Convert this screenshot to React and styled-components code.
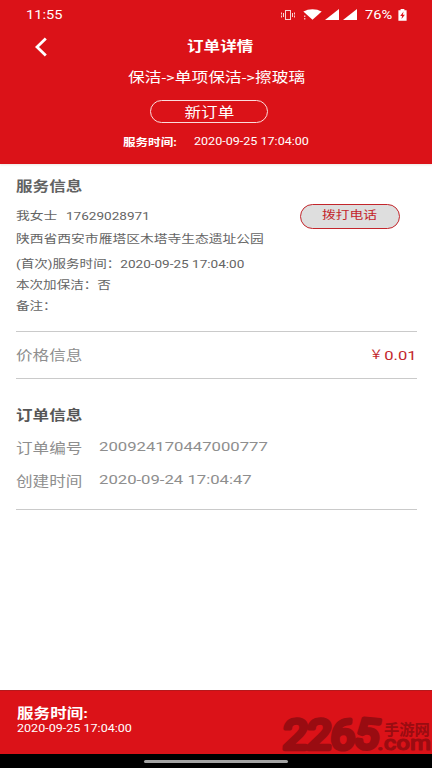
import styled, { createGlobalStyle } from 'styled-components';

const colors = {
  red: '#db1218',
  accent: '#c3262c',
  heading: '#565656',
  text: '#646464',
  muted: '#8e8e8e',
  line: '#cacaca',
  mark: '#990c11',
};

const GlobalStyle = createGlobalStyle`
  * {
    box-sizing: border-box;
  }
  body {
    margin: 0;
    background: #fff;
    font-family: Roboto, "Noto Sans CJK SC", sans-serif;
  }
`;

const Page = styled.div`
  position: relative;
  width: 432px;
  height: 768px;
  display: flex;
  flex-direction: column;
  overflow: hidden;
`;

const Label = styled.span`
  display: block;
  flex: none;
  width: max-content;
  white-space: pre;
  font-size: ${props => props.$size || 11.3}px;
  line-height: 20px;
  font-weight: ${props => props.$weight || 400};
  color: ${props => props.$color || colors.text};
  transform: scaleX(${props => props.$stretch || 1.219});
  transform-origin: ${props => props.$origin || 'left'} center;
`;

const Header = styled.header`
  height: 164px;
  flex: none;
  background: ${colors.red};
  box-shadow: 0 1px 2px rgba(120, 90, 60, 0.15);
`;

const StatusBar = styled.div`
  display: flex;
  align-items: center;
  justify-content: space-between;
  height: 29px;
  padding: 0 25px 0 26px;
`;

const StatusIcons = styled.div`
  display: flex;
  align-items: center;
  svg {
    display: block;
  }
`;

const Percent = styled.div`
  width: 33px;
  margin-left: 8px;
`;

const TitleBar = styled.div`
  display: grid;
  grid-template-columns: 82px 1fr 82px;
  align-items: center;
  justify-items: center;
  height: 36px;
  > ${Label} {
    margin: 0 0 2px 9px;
  }
`;

const BackButton = styled.button`
  display: block;
  padding: 0;
  border: 0;
  background: none;
  svg {
    display: block;
  }
`;

const Crumbs = styled.div`
  display: flex;
  height: 24px;
  padding: 2px 0 0 127.5px;
`;

const StatusPill = styled.div`
  display: flex;
  align-items: center;
  justify-content: center;
  width: 118px;
  height: 23px;
  margin: 11px 0 0 150px;
  border: 1px solid #fbdcdc;
  border-radius: 12px;
`;

const HeaderTime = styled.div`
  display: flex;
  align-items: flex-start;
  margin: 9px 0 0 123px;
  > :first-child {
    width: 71px;
    padding-top: 1px;
  }
`;

const Main = styled.main`
  flex: 1;
  padding: 12px 15px 0 16px;
`;

const Section = styled.section`
  height: ${props => props.$height}px;
  border-bottom: 1px solid ${colors.line};
`;

const ContactRow = styled.div`
  display: flex;
  justify-content: space-between;
  height: 23px;
  margin-top: 11px;
`;

const Contact = styled.div`
  display: flex;
  > :first-child {
    width: 50px;
  }
`;

const CallButton = styled.button`
  display: flex;
  align-items: center;
  justify-content: center;
  width: 100px;
  height: 25px;
  margin: -3px 17px 0 0;
  padding: 0 1px 1px 0;
  border: 1px solid ${colors.accent};
  border-radius: 13px;
  background: #dedede;
  font-family: inherit;
`;

const Line = styled.div`
  height: ${props => props.$height || 21}px;
`;

const PriceRow = styled(Section)`
  display: flex;
  align-items: center;
  justify-content: space-between;
`;

const Price = styled.div`
  display: flex;
  gap: 7px;
`;

const OrderSection = styled(Section)`
  padding-top: 26px;
`;

const Field = styled.div`
  display: flex;
  margin-top: 11px;
  > :first-child {
    width: 83px;
    padding-top: 2px;
  }
`;

const Footer = styled.footer`
  height: 64px;
  flex: none;
  padding: 12px 0 0 17px;
  border-top: 1px solid #b5191c;
  background: ${colors.red};
  > :last-child {
    margin-top: -4px;
  }
`;

const NavBar = styled.div`
  display: flex;
  flex: none;
  align-items: center;
  justify-content: center;
  height: 14px;
  background: #000;
`;

const HomeHandle = styled.div`
  width: 144px;
  height: 3px;
  border-radius: 2px;
  background: #a3a3a3;
`;

const Watermark = styled.svg`
  position: absolute;
  left: 276px;
  top: 704px;
  overflow: visible;
  fill: ${colors.mark};
  stroke: ${colors.mark};
  stroke-linejoin: round;
  stroke-linecap: round;
`;

const MarkNumber = styled.text`
  font-family: Roboto, sans-serif;
  font-size: 41px;
  font-weight: 400;
  stroke-width: 4.4px;
`;

const MarkName = styled.text`
  font-family: "Noto Sans CJK SC", sans-serif;
  font-size: 15.3px;
  font-weight: 700;
  stroke: none;
`;

const MarkDomain = styled.text`
  font-family: Roboto, sans-serif;
  font-size: 20px;
  font-weight: 500;
  stroke-width: 0.9px;
`;

const VibrateIcon = () => (
  <svg width="14" height="12" viewBox="0 0 14 12" fill="none" stroke="#f9d3d3">
    <rect x="4.5" y="1.5" width="5" height="9" />
    <path d="M2.5 4v4M.5 3.5v2M.5 6.5v2M11.5 4v4M13.5 3.5v2M13.5 6.5v2" />
  </svg>
);

const WifiIcon = () => (
  <svg width="19" height="11" viewBox="0 0 19 11" fill="#fff">
    <path d="M0.3 2.6C5.4-0.7 13.6-0.7 18.7 2.6L9.5 10.8Z" />
    <path d="M0.2 6h2.6v5H0.2z" fill={colors.red} />
    <path d="M1 6.4h1.4v1.6H1zM1 8.9h1.4v1.6H1z" fill="#f6baba" />
  </svg>
);

const SignalIcon = () => (
  <svg width="14" height="11" viewBox="0 0 14 11">
    <path d="M14 0v11H0z" fill="#fff" />
  </svg>
);

const BatteryIcon = () => (
  <svg width="9" height="12" viewBox="0 0 9 12">
    <path d="M2.6 0h3.8v1.3H8.6V11.7H0.4V1.3h2.2z" fill="#fff" />
    <path d="M5.6 2.6L2.2 6.9h1.9L3.5 10.1 6.9 5.8H4.8z" fill={colors.red} />
  </svg>
);

const BackIcon = () => (
  <svg width="12" height="20" viewBox="0 0 12 20" fill="none">
    <path d="M10.8 1.4L2 10l8.8 8.6" stroke="#fff" strokeWidth="2.8" />
  </svg>
);

const Gap = styled.span`
  width: ${props => props.$width}px;
`;

const serviceTime = '2020-09-25 17:04:00';

const orderFields = [
  { name: '订单编号', value: '200924170447000777' },
  { name: '创建时间', value: '2020-09-24 17:04:47' },
];

const App = () => (
  <>
    <GlobalStyle />
    <Page>
      <Header>
        <StatusBar>
          <Label $size={12} $color="#fff">11:55</Label>
          <StatusIcons>
            <VibrateIcon />
            <Gap $width={8} />
            <WifiIcon />
            <Gap $width={3} />
            <SignalIcon />
            <Gap $width={4} />
            <SignalIcon />
            <Percent>
              <Label $size={12} $color="#fff">76%</Label>
            </Percent>
            <BatteryIcon />
          </StatusIcons>
        </StatusBar>
        <TitleBar>
          <BackButton aria-label="返回">
            <BackIcon />
          </BackButton>
          <Label $size={13.6} $weight={700} $color="#fff" $origin="center">订单详情</Label>
        </TitleBar>
        <Crumbs>
          <Label $size={13.6} $color="#fff" $stretch={1.23}>{'保洁->单项保洁->擦玻璃'}</Label>
        </Crumbs>
        <StatusPill>
          <Label $size={13.6} $color="#fff" $origin="center">新订单</Label>
        </StatusPill>
        <HeaderTime>
          <Label $size={10.3} $weight={700} $color="#fff">服务时间:</Label>
          <Label $size={10.3} $color="#fff">{serviceTime}</Label>
        </HeaderTime>
      </Header>

      <Main>
        <Section $height={156}>
          <Label $size={13.6} $weight={700} $color="#626262">服务信息</Label>
          <ContactRow>
            <Contact>
              <Label>我女士</Label>
              <Label $stretch={1.2}>17629028971</Label>
            </Contact>
            <CallButton>
              <Label $color={colors.accent} $origin="center">拨打电话</Label>
            </CallButton>
          </ContactRow>
          <Line $height={25}>
            <Label>陕西省西安市雁塔区木塔寺生态遗址公园</Label>
          </Line>
          <Line>
            <Label $stretch={1.2}>(首次)服务时间：{serviceTime}</Label>
          </Line>
          <Line>
            <Label $stretch={1.2}>本次加保洁：否</Label>
          </Line>
          <Line>
            <Label $stretch={1.2}>备注：</Label>
          </Line>
        </Section>
        <PriceRow $height={47}>
          <Label $size={13.6} $color={colors.muted}>价格信息</Label>
          <Price>
            <Label $size={12} $color={colors.accent} $origin="right" $stretch={1.15}>￥</Label>
            <Label $size={13.6} $color={colors.accent} $origin="right">0.01</Label>
          </Price>
        </PriceRow>
        <OrderSection $height={131}>
          <Label $size={13.6} $weight={700} $color={colors.heading}>订单信息</Label>
          {orderFields.map(field => (
            <Field key={field.name}>
              <Label $size={13.6} $color={colors.muted}>{field.name}</Label>
              <Label $size={13.7} $color={colors.muted}>{field.value}</Label>
            </Field>
          ))}
        </OrderSection>
      </Main>

      <Footer>
        <Label $size={13.6} $weight={700} $color="#fff">服务时间:</Label>
        <Label $size={10.3} $color="#fff">{serviceTime}</Label>
      </Footer>
      <NavBar>
        <HomeHandle />
      </NavBar>

      <Watermark width="156" height="50" viewBox="0 0 156 50">
        <MarkNumber
          x="5.5 27.5 49.5 70.5"
          y="45 45 45 43"
          rotate="0 0 0 6"
          transform="translate(3.4 0) scale(1.08 1) skewX(-4)"
        >
          2265
        </MarkNumber>
        <MarkName x="108" y="31">手游网</MarkName>
        <MarkDomain x="101" y="45.5" textLength="54" lengthAdjust="spacingAndGlyphs">
          .com
        </MarkDomain>
      </Watermark>
    </Page>
  </>
);

export default App;
